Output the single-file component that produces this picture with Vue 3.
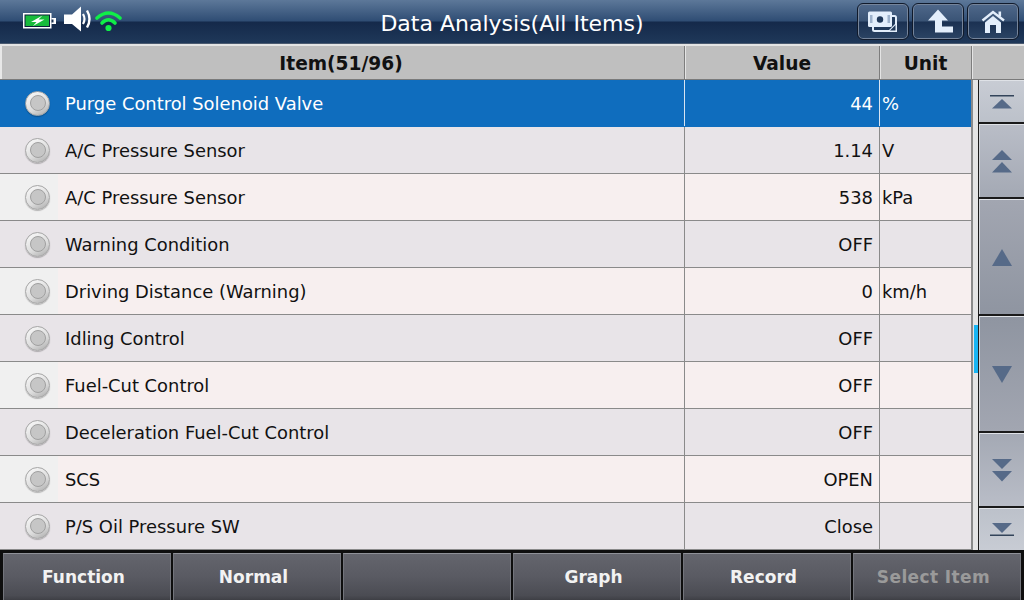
<script setup>
import { ref } from 'vue'

const rows = ref([
  { name: 'Purge Control Solenoid Valve', value: '44', unit: '%' },
  { name: 'A/C Pressure Sensor', value: '1.14', unit: 'V' },
  { name: 'A/C Pressure Sensor', value: '538', unit: 'kPa' },
  { name: 'Warning Condition', value: 'OFF', unit: '' },
  { name: 'Driving Distance (Warning)', value: '0', unit: 'km/h' },
  { name: 'Idling Control', value: 'OFF', unit: '' },
  { name: 'Fuel-Cut Control', value: 'OFF', unit: '' },
  { name: 'Deceleration Fuel-Cut Control', value: 'OFF', unit: '' },
  { name: 'SCS', value: 'OPEN', unit: '' },
  { name: 'P/S Oil Pressure SW', value: 'Close', unit: '' },
])

const footer = ['Function', 'Normal', '', 'Graph', 'Record', 'Select Item']
</script>

<template>
  <div class="screen">
    <header class="topbar">
      <div class="status">
        <svg class="battery" width="33" height="16" viewBox="0 0 33 16">
          <rect x="0" y="0" width="28.5" height="15.5" fill="#fff" />
          <rect x="1.5" y="1.5" width="25.5" height="12.5" fill="#0b1f3a" />
          <rect x="2.5" y="2.5" width="23.5" height="10.5" fill="#18bb3c" />
          <rect x="28.5" y="5" width="4.5" height="6" fill="#fff" />
          <rect x="28.5" y="6.5" width="2" height="3" fill="#1b3050" />
          <path d="M19.5 2.6 L8 9 L13.5 9 L10 13 L21.5 6.6 L15.5 6.6 Z" fill="#fff" />
        </svg>
        <svg class="speaker" width="28" height="26" viewBox="0 0 28 26">
          <path d="M0 8.5 H8 L17 0.5 V25.5 L8 18 H0 Z" fill="#fff" />
          <path d="M19 8 Q22 13 19 18" fill="none" stroke="#fff" stroke-width="2.2" />
          <path d="M23 4.5 Q28 13 23 21.5" fill="none" stroke="#fff" stroke-width="2.4" />
        </svg>
        <svg class="wifi" width="28" height="22" viewBox="0 0 28 22">
          <path d="M2 8 Q13.5 -2 25 8" fill="none" stroke="#10ee48" stroke-width="3.6" stroke-linecap="round" />
          <path d="M7 13 Q13.5 6.5 20 13" fill="none" stroke="#10ee48" stroke-width="3.6" stroke-linecap="round" />
          <circle cx="13.5" cy="18" r="3.1" fill="#10ee48" />
        </svg>
      </div>
      <div class="title">Data Analysis(All Items)</div>
      <div class="top-buttons">
        <button class="top-btn">
          <svg width="32" height="24" viewBox="0 0 32 24">
            <rect x="6" y="6" width="23" height="15" rx="1.5" fill="#20395a" stroke="#e3eefb" stroke-width="2" />
            <path d="M20 22 L30 12 V22 Z" fill="#e3eefb" />
            <path d="M23 20.5 L28.5 15 V20.5 Z" fill="#20395a" />
            <rect x="1" y="1.5" width="24" height="15.5" rx="1.5" fill="#e3eefb" />
            <rect x="3" y="5" width="2.5" height="8" fill="#9db2cc" />
            <rect x="20.5" y="5" width="2.5" height="8" fill="#9db2cc" />
            <circle cx="13" cy="9.5" r="3.2" fill="#20395a" />
          </svg>
        </button>
        <button class="top-btn">
          <svg width="30" height="26" viewBox="0 0 30 26">
            <path d="M15 0.5 L25 11.5 H19 V17.5 H30 V23.5 H12 V11.5 H5 Z" fill="#e3eefb" />
          </svg>
        </button>
        <button class="top-btn">
          <svg width="26" height="26" viewBox="0 0 26 26">
            <path d="M2.5 11.5 L13 3 L24 11.5" fill="none" stroke="#e3eefb" stroke-width="2.4" />
            <rect x="18.5" y="2.5" width="2.6" height="5" fill="#e3eefb" />
            <path d="M13 7 L21 13.5 V24 H16 V16 H10 V24 H5 V13.5 Z" fill="#e3eefb" />
          </svg>
        </button>
      </div>
    </header>

    <div class="table">
      <div class="thead">
        <div class="th c-item">Item(51/96)</div>
        <div class="th c-value">Value</div>
        <div class="th c-unit">Unit</div>
        <div class="th c-rest"></div>
      </div>
      <div class="body">
        <div class="tbody">
          <div
            v-for="(row, i) in rows"
            :key="i"
            class="row"
            :class="{ selected: i === 0, odd: i % 2 === 1 }"
          >
            <div class="cell c-item name">
              <span class="radio"><span class="dot"></span></span>
              <span>{{ row.name }}</span>
            </div>
            <div class="cell c-value value">{{ row.value }}</div>
            <div class="cell c-unit unit">{{ row.unit }}</div>
          </div>
        </div>

        <aside class="scroll">
          <div class="track"><span class="thumb"></span></div>
          <div class="scroll-btns">
            <button class="sb sb-top">
              <svg width="24" height="14" viewBox="0 0 24 14">
                <rect x="0" y="0" width="24" height="1.5" fill="#33445a" />
                <path d="M12 4 L22 13.5 H2 Z" fill="#566a88" />
              </svg>
            </button>
            <button class="sb sb-second">
              <svg width="20" height="24" viewBox="0 0 20 24">
                <path d="M10 1 L20 11 H0 Z" fill="#566a88" />
                <path d="M10 13 L20 23.5 H0 Z" fill="#566a88" />
              </svg>
            </button>
            <button class="sb sb-up">
              <svg width="20" height="17" viewBox="0 0 20 17"><path d="M10 0 L20 17 H0 Z" fill="#566a88" /></svg>
            </button>
            <button class="sb sb-down">
              <svg width="20" height="17" viewBox="0 0 20 17"><path d="M0 0 H20 L10 17 Z" fill="#566a88" /></svg>
            </button>
            <button class="sb sb-third">
              <svg width="20" height="24" viewBox="0 0 20 24">
                <path d="M0 1 H20 L10 11 Z" fill="#566a88" />
                <path d="M0 13 H20 L10 23.5 Z" fill="#566a88" />
              </svg>
            </button>
            <button class="sb sb-bottom">
              <svg width="24" height="14" viewBox="0 0 24 14">
                <path d="M2 0 H22 L12 10 Z" fill="#566a88" />
                <rect x="0" y="11.5" width="24" height="1.5" fill="#33445a" />
              </svg>
            </button>
          </div>
        </aside>
      </div>
    </div>

    <footer class="footer">
      <button
        v-for="(label, i) in footer"
        :key="i"
        class="foot-btn"
        :class="{ disabled: label === 'Select Item' }"
      >{{ label }}</button>
    </footer>
  </div>
</template>

<style scoped>
.screen {
  width: 1024px;
  height: 600px;
  display: flex;
  flex-direction: column;
  overflow: hidden;
  font-family: "DejaVu Sans", sans-serif;
  background: #000;
}

.topbar {
  height: 44px;
  flex: none;
  box-sizing: border-box;
  display: flex;
  align-items: flex-start;
  position: relative;
  background: linear-gradient(#5d7899 0, #2f4d74 21px, #14294a 22px, #1f3859 100%);
  border-bottom: 1px solid #4a5a70;
}

.status {
  display: flex;
  align-items: flex-start;
  padding-left: 23px;
}

.battery {
  margin-top: 13px;
}

.speaker {
  margin: 6px 0 0 8px;
}

.wifi {
  margin: 10px 0 0 3px;
}

.title {
  position: absolute;
  left: 0;
  right: 0;
  top: 8px;
  text-align: center;
  color: #fff;
  font-size: 22px;
  line-height: 32px;
}

.top-buttons {
  margin-left: auto;
  display: flex;
  gap: 3px;
  padding: 3px 5px 0 0;
}

.top-btn {
  width: 52px;
  height: 37px;
  padding: 0;
  display: flex;
  align-items: center;
  justify-content: center;
  box-sizing: border-box;
  border: 1px solid #101a2b;
  border-radius: 6px;
  box-shadow: inset 0 0 0 1px #75849a;
  background: linear-gradient(#4f688a 0, #3a5476 48%, #1b3152 52%, #2b4464 100%);
}

.table {
  flex: 1;
  min-height: 0;
  display: flex;
  flex-direction: column;
  background: #c9c9c9;
}

.thead {
  height: 36px;
  flex: none;
  box-sizing: border-box;
  display: flex;
  background: #bfbfbf;
  border-top: 2px solid #e4e4e4;
  border-bottom: 1px solid #7a7a7a;
}

.th {
  display: flex;
  align-items: center;
  justify-content: center;
  padding-top: 2px;
  font-weight: bold;
  font-size: 18.6px;
  color: #111;
  box-sizing: border-box;
  border-left: 2px solid #e8e8e8;
}

.th.c-item {
  padding-right: 4px;
}

.th.c-value,
.th.c-unit,
.th.c-rest {
  border-left: 1px solid #7d7d7d;
  box-shadow: inset 1px 0 0 #e4e4e4;
}

.c-item {
  width: 684px;
  flex: none;
}

.c-value {
  width: 195px;
  flex: none;
}

.c-unit {
  width: 92px;
  flex: none;
}

.c-rest {
  flex: 1;
}

.body {
  flex: 1;
  min-height: 0;
  display: flex;
}

.tbody {
  width: 971px;
  flex: none;
}

.row {
  height: 47px;
  box-sizing: border-box;
  display: flex;
  color: #111;
  font-size: 17.9px;
  background: #f7efef;
  border-bottom: 1px solid #8a8a8a;
}

.row.odd {
  background: #e8e4e8;
}

.row.selected {
  background: #0f6dbe;
  color: #fff;
  border-bottom-color: #0f6dbe;
}

.cell {
  display: flex;
  align-items: center;
  box-sizing: border-box;
}

.name {
  background: linear-gradient(90deg, #f0f0f0 58px, transparent 58px);
  padding-left: 25px;
  gap: 15px;
}

.row.odd .name,
.row.selected .name {
  background: none;
}

.radio {
  width: 25px;
  height: 25px;
  box-sizing: border-box;
  border-radius: 50%;
  display: flex;
  align-items: center;
  justify-content: center;
  background: linear-gradient(150deg, #fbfbfb, #dcdcdc 60%, #a8a8a8);
  border: 1px solid #a6a6a6;
  box-shadow: 0 1px 1px rgba(0, 0, 0, 0.25);
}

.dot {
  width: 16px;
  height: 16px;
  box-sizing: border-box;
  border-radius: 50%;
  background: #c6c6c6;
  border: 1px solid #a0a0a0;
}

.value {
  justify-content: flex-end;
  padding-right: 6px;
  border-left: 1px solid #8a8a8a;
}

.row.selected .value,
.row.selected .unit {
  border-left-color: #d8e4f2;
}

.unit {
  padding-left: 2px;
  border-left: 1px solid #8a8a8a;
}

.scroll {
  flex: 1;
  display: flex;
}

.track {
  width: 7px;
  flex: none;
  box-sizing: border-box;
  background: #e4e4e4;
  border-left: 2px solid #8a8a8a;
  position: relative;
}

.thumb {
  position: absolute;
  left: 1px;
  top: 245px;
  width: 4px;
  height: 48px;
  background: #18b4f2;
}

.scroll-btns {
  flex: 1;
  display: flex;
  flex-direction: column;
  background: #1a1a1a;
  gap: 2px;
  padding-left: 1px;
}

.sb {
  padding: 0;
  display: flex;
  align-items: center;
  justify-content: center;
  border: none;
  border-top: 1px solid #dfe2e7;
  border-left: 1px solid #d0d3d8;
}

.sb-top {
  height: 42px;
  background: linear-gradient(#c8ccd4, #bcc1ca);
}

.sb-second {
  height: 73px;
  background: linear-gradient(#b9bdc7, #a4a9b4);
}

.sb-up {
  height: 115px;
  background: linear-gradient(#a2a6b1, #8f95a1);
}

.sb-down {
  height: 115px;
  background: linear-gradient(#8f95a1, #a2a6b1);
}

.sb-third {
  height: 73px;
  background: linear-gradient(#a4a9b4, #b9bdc7);
}

.sb-bottom {
  flex: 1;
  background: linear-gradient(#bcc1ca, #c8ccd4);
}

.footer {
  height: 50px;
  flex: none;
  box-sizing: border-box;
  display: flex;
  gap: 2px;
  padding: 3px 3px 0;
  background: #0e0e0e;
}

.foot-btn {
  flex: 1;
  padding: 0 7px 0 0;
  font-family: inherit;
  font-weight: bold;
  font-size: 17px;
  color: #f2f2f2;
  border: none;
  border-top: 1px solid #8f9198;
  border-left: 1px solid #73757c;
  border-right: 1px solid #73757c;
  background: linear-gradient(#64656d 0, #595a62 50%, #4b4c53 90%, #3e3f45 100%);
}

.foot-btn.disabled {
  color: #9a9a9a;
  letter-spacing: 0.4px;
}
</style>
